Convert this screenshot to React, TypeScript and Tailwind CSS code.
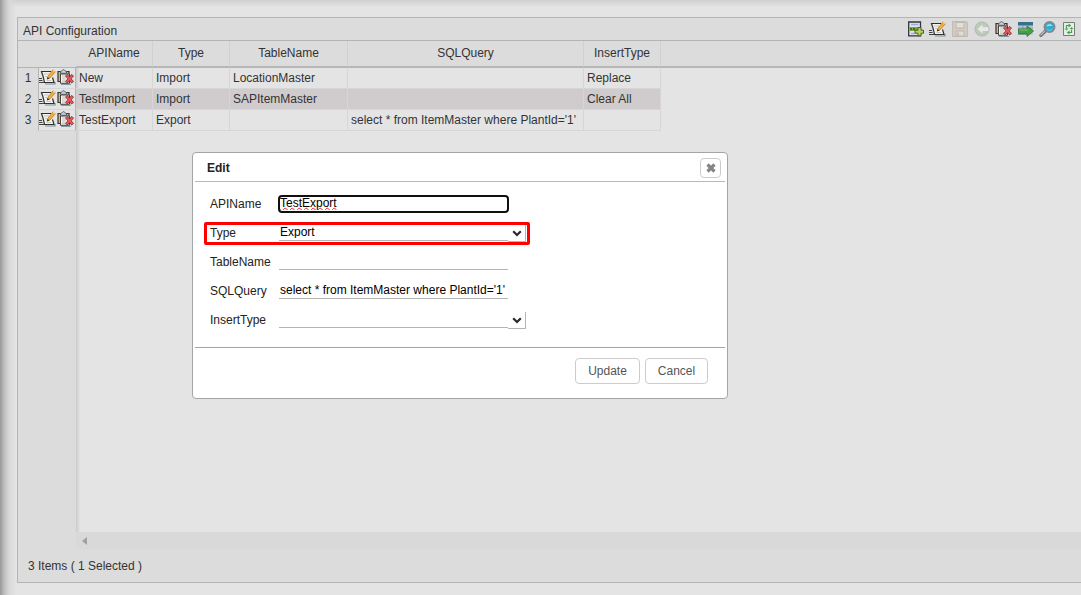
import React from 'react';

type IconProps = { className?: string };

const AddIcon: React.FC<IconProps> = ({ className }) => (
  <svg className={className} width="16" height="16" viewBox="0 0 16 16" fill="none">
    <path d="M.7 1H12.500V14.800H.7z" fill="#dfe3f2" stroke="#34343c" strokeWidth="1.300" />
    <path d="M3 3.500H10.500M3 12.500H7" stroke="#9fabd2" strokeWidth="1.500" />
    <path d="M1.500 6H12V10H1.500z" fill="#78a83c" />
    <path d="M2 8H8" stroke="#35600e" strokeWidth="1.500" strokeDasharray="2 1" />
    <path d="M10 6.500h3v2.700h2.500v3h-2.500v2.600h-3v-2.600H7v-3h3z" fill="#b4d465" stroke="#4c5c2e" />
  </svg>
);

const EditIcon: React.FC<IconProps> = ({ className }) => (
  <svg className={className} width="17" height="16" viewBox="0 0 17 16" fill="none">
    <path d="M6 15H16V13" stroke="#7693a0" strokeWidth="1.200" />
    <path d="M2.500 2.500H12L15 13.500H5.500z" fill="#f3f2ee" />
    <path d="M12 2.500H2.500L4 7L5.500 13.500H15L13.500 8.500" stroke="#30302e" strokeWidth="1.200" />
    <path d="M5 5H10M6 7.500H8M7.500 11.500H12" stroke="#c5c3be" />
    <path d="M0 9.500H3M0 11.500H3.500M0 13.500H5" stroke="#42423f" />
    <path d="M8.200 9.800L9 7L14 .8L16.300 2.700L11 9z" fill="#f6ad3d" stroke="#a8752c" strokeWidth=".7" />
    <path d="M7.800 10.400L8.700 7.900L10.500 9.400z" fill="#34302a" />
    <path d="M14.200 1L16 2.500" stroke="#f9ddaa" strokeWidth="1.200" />
  </svg>
);

const SaveIcon: React.FC<IconProps> = ({ className }) => (
  <svg className={className} width="16" height="16" viewBox="0 0 16 16" fill="none">
    <path d="M.7 .7H14L15.300 2V15.300H.7z" fill="#d6cdc0" stroke="#c0bcb8" strokeWidth="1.200" />
    <path d="M4 1.500H12V7H4z" fill="#dddfe0" stroke="#c0b5a6" />
    <path d="M4 10H12V15H4z" fill="#dedddb" stroke="#c0b5a6" />
    <path d="M6 11.500V14.500" stroke="#bab8b5" strokeWidth="1.500" />
  </svg>
);

const UndoIcon: React.FC<IconProps> = ({ className }) => (
  <svg className={className} width="16" height="16" viewBox="0 0 16 16" fill="none">
    <circle cx="8" cy="8" r="7" fill="#bccbb9" stroke="#b1b8b0" />
    <path d="M3.500 8L8.500 3.500V6.300H15V10H8.500V12.500z" fill="#e8e9e7" />
    <path d="M15 6V10" stroke="#b9bfb8" />
  </svg>
);

const DeleteIcon: React.FC<IconProps> = ({ className }) => (
  <svg className={className} width="17" height="16" viewBox="0 0 17 16" fill="none">
    <path d="M4 15.400H14" stroke="#7693a0" />
    <path d="M1 2.500H12V12.500H1z" fill="#d3b48b" stroke="#3a3531" strokeWidth="1.200" />
    <path d="M3.500 5H12.500V14.300H3.500z" fill="#f7f6f3" stroke="#45413c" />
    <path d="M3.500 2.500C5 2.500 5 .7 6.500 .7C8 .7 8 2.500 9.500 2.500V4.300H3.500z" fill="#c7d4dd" stroke="#4c5a65" />
    <path d="M5 7H8.500M5 9H9M5 11H8.500M5 12.800H8" stroke="#b3b0ab" strokeWidth=".8" />
    <path d="M9.200 6L15.800 13.500M15.800 6L9.200 13.500" stroke="#8a3034" strokeWidth="3.200" />
    <path d="M9.500 6.400L15.500 13.100M15.500 6.400L9.500 13.100" stroke="#e4585c" strokeWidth="1.900" />
  </svg>
);

const ExportIcon: React.FC<IconProps> = ({ className }) => (
  <svg className={className} width="16" height="16" viewBox="0 0 16 16" fill="none">
    <path d="M0 1H15V14H0z" fill="#b9cad4" />
    <path d="M0 1H15V4.500H0z" fill="#37708e" />
    <path d="M0 7H15M0 13.500H9M5 4V14M10 4V14" stroke="#7f9cad" />
    <path d="M.5 8H9V5L15.500 10L9 15.500V12.500H.5z" fill="#46a143" stroke="#2f7331" strokeWidth=".8" />
    <path d="M1.500 9H10" stroke="#7cc474" />
  </svg>
);

const SearchIcon: React.FC<IconProps> = ({ className }) => (
  <svg className={className} width="17" height="16" viewBox="0 0 17 16" fill="none">
    <path d="M6.500 10L1.900 14.300" stroke="#6a6774" strokeWidth="3.200" strokeLinecap="round" />
    <path d="M5.500 10.500L1.900 14" stroke="#bdbbc6" strokeWidth="1.400" strokeLinecap="round" />
    <circle cx="10.500" cy="6" r="5.200" fill="#36a9ce" stroke="#858793" strokeWidth="1.600" />
    <path d="M7.500 5.500C8 2.800 12.500 2.300 13.500 5C11.500 4.500 9.500 4.500 7.500 5.500z" fill="#b7e8f3" />
    <path d="M8 8C9.500 10 12 9.800 13 7.800" stroke="#6bd8e8" />
  </svg>
);

const RefreshIcon: React.FC<IconProps> = ({ className }) => (
  <svg className={className} width="13" height="14" viewBox="0 0 13 14" fill="none">
    <path d="M.5 .5H11.500V13.500H.5z" fill="#e7ede6" stroke="#758075" />
    <path d="M6 3.500H3.500V6.500M6 10.500H8.500V7.500" stroke="#46a34d" strokeWidth="1.200" />
    <path d="M5.500 1.500L8.300 3.500L5.500 5.500zM6.500 8.500L3.700 10.500L6.500 12.500z" fill="#46a34d" />
    <path d="M6.500 7H10.500L8.500 5zM1.500 6.500H5.500L3.500 8.500z" fill="#46a34d" />
  </svg>
);

const Chevron: React.FC = () => (
  <svg width="10" height="7" viewBox="0 0 10 7" fill="none">
    <path d="M1.200 1.200L5 5L8.800 1.200" stroke="#2b2530" strokeWidth="2.200" />
  </svg>
);

const tools = [
  { name: 'Add', icon: AddIcon },
  { name: 'Edit', icon: EditIcon },
  { name: 'Save', icon: SaveIcon },
  { name: 'Undo', icon: UndoIcon },
  { name: 'Delete', icon: DeleteIcon },
  { name: 'Export', icon: ExportIcon },
  { name: 'Search', icon: SearchIcon },
  { name: 'Refresh', icon: RefreshIcon },
];

const rows = [
  { name: 'New', type: 'Import', table: 'LocationMaster', query: '', insert: 'Replace' },
  { name: 'TestImport', type: 'Import', table: 'SAPItemMaster', query: '', insert: 'Clear All', selected: true },
  { name: 'TestExport', type: 'Export', table: '', query: "select * from ItemMaster where PlantId='1'", insert: '' },
];

const columns = ['APIName', 'Type', 'TableName', 'SQLQuery', 'InsertType'];

const ConfigTable: React.FC = () => (
  <table className="w-full table-fixed border-separate border-spacing-0">
    <colgroup>
      <col className="w-[20px]" />
      <col className="w-[38px]" />
      <col className="w-[77px]" />
      <col className="w-[77px]" />
      <col className="w-[118px]" />
      <col className="w-[236px]" />
      <col className="w-[77px]" />
      <col />
    </colgroup>
    <thead>
      <tr className="h-[27px] bg-[#dcdcdc]">
        <th colSpan={2} className="border-b border-[#b4b4b4] p-0"></th>
        {columns.map((column) => (
          <th
            key={column}
            className="border-r border-b-2 border-r-[#d0d0d0] border-b-[#b7b7b7] px-0 pt-0 pb-[2px] text-center font-normal"
          >
            {column}
          </th>
        ))}
        <th className="border-b-2 border-[#b7b7b7] p-0"></th>
      </tr>
    </thead>
    <tbody>
      {rows.map((row, index) => (
        <tr key={row.name} className="h-[21px]">
          <td className="px-0 pt-0 pb-[2px] text-center">{index + 1}</td>
          <td className="border-x border-b border-x-[#b4b4b4] border-b-[#d6d6d6] bg-[#e4e4e4] px-0 pt-0 pb-[2px]">
            <div className="flex gap-px">
              <button aria-label={`Edit ${row.name}`}><EditIcon /></button>
              <button aria-label={`Delete ${row.name}`}><DeleteIcon /></button>
            </div>
          </td>
          {[row.name, row.type, row.table, row.query, row.insert].map((value, cell) => (
            <td
              key={cell}
              className={`border-r border-b border-[#d6d6d6] px-[3px] py-0 whitespace-nowrap ${row.selected ? 'bg-[#d0cccd]' : ''}`}
            >
              {value}
            </td>
          ))}
          <td className="p-0"></td>
        </tr>
      ))}
    </tbody>
  </table>
);

const fieldClass = 'h-[16px] w-[229px] appearance-none border-b border-[#b4b4b4] bg-transparent px-px pb-[2px] leading-[14px] text-black';

const Field: React.FC<{ id: string; label: string; highlight?: boolean; children: React.ReactNode }> = ({
  id,
  label,
  highlight,
  children,
}) => (
  <div className={`flex h-[23px] w-[326px] items-start rounded-[2px] border-3 ${highlight ? 'border-[#ff0000]' : 'border-transparent'}`}>
    <label htmlFor={id} className="w-[72px] shrink-0 pl-[3px] leading-[17px]">
      {label}
    </label>
    {children}
  </div>
);

const SelectField: React.FC<{ id: string; value: string; options: string[] }> = ({ id, value, options }) => (
  <>
    <select id={id} defaultValue={value} className={`${fieldClass} outline-none`}>
      {options.map((option) => (
        <option key={option} value={option}>{option}</option>
      ))}
    </select>
    <span className="flex h-[17px] w-[18px] items-center justify-center border-r border-b border-[#b4b4b4] pt-px">
      <Chevron />
    </span>
  </>
);

const EditDialog: React.FC = () => (
  <div
    role="dialog"
    aria-labelledby="dialog-title"
    className="absolute top-[152px] left-[192px] w-[536px] rounded border border-[#a5a5a5] bg-white text-[#222222]"
  >
    <div className="mx-[2px] flex h-[29px] items-center justify-between border-b border-[#b9b9b9] pt-[2px] pr-1 pl-3">
      <h2 id="dialog-title" className="font-bold">Edit</h2>
      <button aria-label="Close" className="flex h-[20px] w-[21px] items-center justify-center rounded border border-[#cccccc]">
        <svg width="10" height="10" viewBox="0 0 10 10">
          <path d="M1.500 1.500L8.500 8.500M8.500 1.500L1.500 8.500" stroke="#858585" strokeWidth="3.200" />
        </svg>
      </button>
    </div>
    <div className="flex flex-col gap-[6px] pt-[11px] pb-[15px] pl-[11px]">
      <Field id="api-name" label="APIName">
        <input
          id="api-name"
          defaultValue="TestExport"
          className={`${fieldClass} rounded-[3px] underline decoration-[#f02020] decoration-wavy decoration-1 underline-offset-0 outline-2 -outline-offset-1 outline-[#101010] [text-decoration-skip-ink:none]`}
        />
      </Field>
      <Field id="type" label="Type" highlight>
        <SelectField id="type" value="Export" options={['Import', 'Export']} />
      </Field>
      <Field id="table-name" label="TableName">
        <input id="table-name" className={fieldClass} />
      </Field>
      <Field id="sql-query" label="SQLQuery">
        <input id="sql-query" defaultValue="select * from ItemMaster where PlantId='1'" className={fieldClass} />
      </Field>
      <Field id="insert-type" label="InsertType">
        <SelectField id="insert-type" value="" options={['', 'Replace', 'Clear All']} />
      </Field>
    </div>
    <div className="mx-[2px] flex justify-end gap-[5px] border-t border-[#a5a5a5] pt-[10px] pr-[17px] pb-[14px] text-[#555555]">
      <button className="h-[26px] w-[65px] rounded border border-[#cccccc]">Update</button>
      <button className="h-[26px] w-[63px] rounded border border-[#cccccc]">Cancel</button>
    </div>
  </div>
);

const App: React.FC = () => {
  return (
    <div className="relative flex min-h-screen flex-col bg-[#e4e4e4] bg-[linear-gradient(90deg,#989898_0px,#bcbcbc_4px,#d8d8d8_9px,transparent_16px),linear-gradient(180deg,#d0d0d0_0px,transparent_7px)] pt-[17px] pb-3 pl-[17px] font-['Liberation_Sans',Arial,sans-serif] text-[12px] leading-[16px] text-[#333333]">
      <main className="flex flex-1 flex-col border-y border-l border-[#b4b4b4] bg-[#dcdcdc]">
        <div className="flex h-[23px] items-center justify-between border-b border-[#b4b4b4] pr-[3px] pl-[5px]">
          <h1 className="pt-1">API Configuration</h1>
          <div className="flex gap-[5px]">
            {tools.map((tool) => {
              const Icon = tool.icon;
              return (
                <button key={tool.name} aria-label={tool.name} className="flex h-4 w-[17px] items-center justify-center">
                  <Icon />
                </button>
              );
            })}
          </div>
        </div>
        <div className="flex-1 bg-[linear-gradient(90deg,#dcdcdc_58px,#cacaca_58px,#e4e4e4_62px)]">
          <ConfigTable />
        </div>
        <div className="ml-[58px] flex h-[17px] items-center bg-[#d9d9d9] pl-[6px]">
          <svg width="5" height="8" viewBox="0 0 5 8">
            <path d="M5 0V8L0 4z" fill="#a0a0a0" />
          </svg>
        </div>
        <footer className="h-[33px] pl-[10px] leading-[35px]">3 Items ( 1 Selected )</footer>
      </main>
      <EditDialog />
    </div>
  );
};

export default App;
